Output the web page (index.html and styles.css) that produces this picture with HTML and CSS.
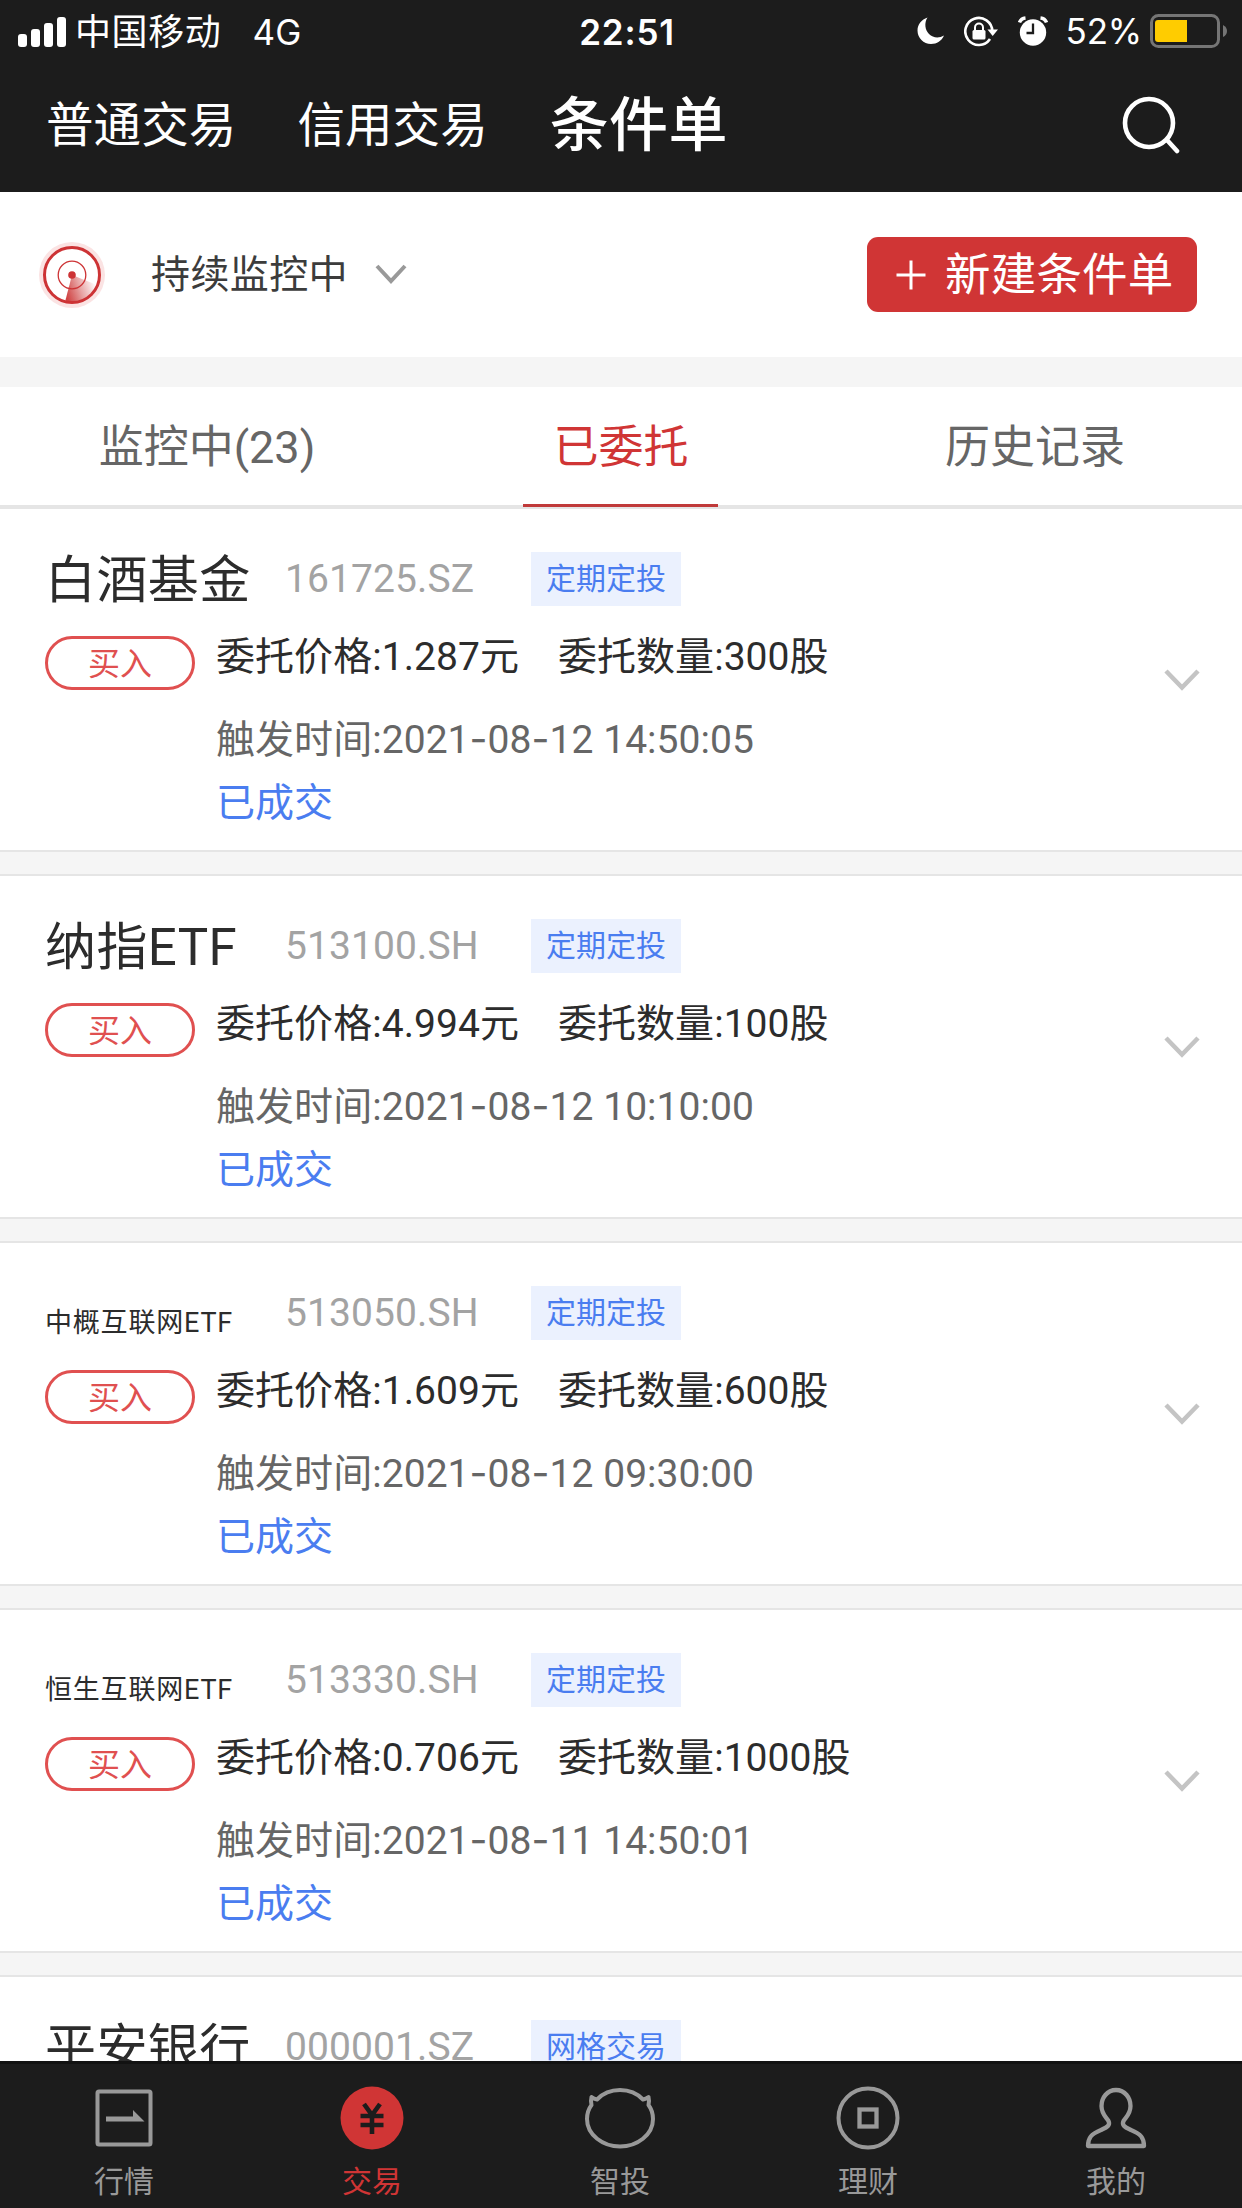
FILE: index.html
```html
<!DOCTYPE html>
<html lang="zh-CN">
<head>
<meta charset="utf-8">
<title>条件单</title>
<link rel="stylesheet" href="styles.css">
</head>
<body>
<div class="app">
  <header class="top">
    <div class="status">
      <div class="status-left">
        <svg class="signal" width="48" height="30" viewBox="0 0 48 30"><g fill="#fff"><rect x="0" y="17" width="9" height="13" rx="3"/><rect x="13" y="12" width="9" height="18" rx="3"/><rect x="26" y="6" width="9" height="24" rx="3"/><rect x="39" y="0" width="9" height="30" rx="3"/></g></svg>
        <span class="carrier">中国移动</span>
        <span class="network">4G</span>
      </div>
      <div class="clock">22:51</div>
      <div class="status-right">
        <svg class="moon" width="28" height="28" viewBox="0 0 28 28"><path fill="#fff" d="M10.5 0.5C7 6 8 13 12 17C16 21 22 21.5 27 18.5C24.500 24 20 27 14 27C6.500 27 0.500 21 0.500 13.500C0.500 7.500 4.500 2.500 10.500 0.500Z"/></svg>
        <svg class="lock" width="34" height="31" viewBox="0 0 34 31"><path d="M28.300 15.200A13.500 13.500 0 1 0 26 23" fill="none" stroke="#fff" stroke-width="2.600"/><path fill="#fff" d="M23.500 13.500H34L28.700 20Z"/><rect x="8.500" y="14" width="13" height="9.500" rx="1.500" fill="#fff"/><path d="M11 15V11.500A4 4 0 0 1 19 11.500V15" fill="none" stroke="#fff" stroke-width="2"/></svg>
        <svg class="alarm" width="30" height="30" viewBox="0 0 30 30"><circle cx="15" cy="16.500" r="13.200" fill="#fff"/><path d="M1.500 6.500Q3 2.500 7.500 2M28.500 6.500Q27 2.500 22.500 2" stroke="#fff" stroke-width="3.500" fill="none"/><path d="M15 7.500V17H8.500" stroke="#1c1c1c" stroke-width="2.300" fill="none"/></svg>
        <span class="percent">52%</span>
        <svg class="battery" width="78" height="34" viewBox="0 0 78 34"><rect x="1.500" y="1.500" width="67" height="31" rx="7" fill="none" stroke="#757575" stroke-width="3"/><path d="M8 6H37V28H8Q5 28 5 25V9Q5 6 8 6Z" fill="#ffcc00"/><path d="M73 11Q77 13 77 17T73 23Z" fill="#757575"/></svg>
      </div>
    </div>
    <nav class="main-nav">
      <a class="nav-link">普通交易</a>
      <a class="nav-link">信用交易</a>
      <a class="nav-link nav-link-active">条件单</a>
      <svg class="search" width="60" height="60" viewBox="0 0 60 60"><g fill="none" stroke="#fff" stroke-width="4.600" stroke-linecap="round"><circle cx="28" cy="29" r="24"/><path d="M46 46L56 57"/></g></svg>
    </nav>
  </header>

  <section class="monitor">
    <svg class="radar" width="68" height="68" viewBox="0 0 68 68">
      <defs><linearGradient id="sweep" x1="0" y1="0.600" x2="0.950" y2="0.300"><stop offset="0" stop-color="#d04545"/><stop offset="0.500" stop-color="#cc3a3a" stop-opacity="0.450"/><stop offset="1" stop-color="#cc3a3a" stop-opacity="0"/></linearGradient></defs>
      <circle cx="34" cy="34" r="33" fill="#fbe3e3"/><circle cx="34" cy="34" r="27.500" fill="#fff"/>
      <path d="M34 34L27 61A27.500 27.500 0 0 0 59 44Z" fill="url(#sweep)"/>
      <circle cx="34" cy="34" r="27.500" fill="none" stroke="#cd3335" stroke-width="3"/>
      <circle cx="34" cy="34" r="13.800" fill="none" stroke="#cd3335" stroke-width="1.300"/>
      <circle cx="34" cy="34" r="3.800" fill="#cd3335"/>
    </svg>
    <span class="monitor-text">持续监控中</span>
    <svg class="monitor-arrow" width="34" height="24" viewBox="0 0 34 24"><path d="M3 3L17 18L31 3" fill="none" stroke="#999" stroke-width="4"/></svg>
    <button class="create"><svg width="30" height="30" viewBox="0 0 30 30"><path d="M15 0.500V29.500M0.500 15H29.500" stroke="#fff" stroke-width="3"/></svg><span>新建条件单</span></button>
  </section>

  <nav class="tabs">
    <a class="tab">监控中(23)</a>
    <a class="tab tab-active">已委托</a>
    <a class="tab">历史记录</a>
  </nav>

  <main class="orders">
    <article class="order">
      <div class="order-head"><h2 class="name">白酒基金</h2><span class="code">161725.SZ</span><span class="tag">定期定投</span></div>
      <div class="order-body">
        <span class="side">买入</span>
        <div class="details">
          <p class="price"><span>委托价格:1.287元</span><span>委托数量:300股</span></p>
          <p class="time">触发时间:2021<i class="dash">-</i>08<i class="dash">-</i>12 14:50:05</p>
          <p class="state">已成交</p>
        </div>
        <svg class="expand" width="36" height="24" viewBox="0 0 36 24"><path d="M2 2L18 18.500L34 2" fill="none" stroke="#c4c4c4" stroke-width="4.500"/></svg>
      </div>
    </article>
    <article class="order">
      <div class="order-head"><h2 class="name">纳指ETF</h2><span class="code">513100.SH</span><span class="tag">定期定投</span></div>
      <div class="order-body">
        <span class="side">买入</span>
        <div class="details">
          <p class="price"><span>委托价格:4.994元</span><span>委托数量:100股</span></p>
          <p class="time">触发时间:2021<i class="dash">-</i>08<i class="dash">-</i>12 10:10:00</p>
          <p class="state">已成交</p>
        </div>
        <svg class="expand" width="36" height="24" viewBox="0 0 36 24"><path d="M2 2L18 18.500L34 2" fill="none" stroke="#c4c4c4" stroke-width="4.500"/></svg>
      </div>
    </article>
    <article class="order">
      <div class="order-head"><h2 class="name name-small">中概互联网ETF</h2><span class="code">513050.SH</span><span class="tag">定期定投</span></div>
      <div class="order-body">
        <span class="side">买入</span>
        <div class="details">
          <p class="price"><span>委托价格:1.609元</span><span>委托数量:600股</span></p>
          <p class="time">触发时间:2021<i class="dash">-</i>08<i class="dash">-</i>12 09:30:00</p>
          <p class="state">已成交</p>
        </div>
        <svg class="expand" width="36" height="24" viewBox="0 0 36 24"><path d="M2 2L18 18.500L34 2" fill="none" stroke="#c4c4c4" stroke-width="4.500"/></svg>
      </div>
    </article>
    <article class="order">
      <div class="order-head"><h2 class="name name-small">恒生互联网ETF</h2><span class="code">513330.SH</span><span class="tag">定期定投</span></div>
      <div class="order-body">
        <span class="side">买入</span>
        <div class="details">
          <p class="price"><span>委托价格:0.706元</span><span>委托数量:1000股</span></p>
          <p class="time">触发时间:2021<i class="dash">-</i>08<i class="dash">-</i>11 14:50:01</p>
          <p class="state">已成交</p>
        </div>
        <svg class="expand" width="36" height="24" viewBox="0 0 36 24"><path d="M2 2L18 18.500L34 2" fill="none" stroke="#c4c4c4" stroke-width="4.500"/></svg>
      </div>
    </article>
    <article class="order">
      <div class="order-head"><h2 class="name">平安银行</h2><span class="code">000001.SZ</span><span class="tag">网格交易</span></div>
    </article>
  </main>

  <nav class="bottom">
    <a class="item"><svg width="72" height="66" viewBox="0 0 72 66"><rect x="9.500" y="6.500" width="53" height="53" rx="1.500" fill="none" stroke="#999" stroke-width="4"/><path d="M18 31.500H45V25L56.500 36.500H18Z" fill="#999"/></svg><span>行情</span></a>
    <a class="item item-active"><svg width="72" height="66" viewBox="0 0 72 66"><circle cx="36" cy="33" r="31.500" fill="#d03535"/><path d="M28 19L36 30L44 19M36 29V49M24.500 31H47.500M24.500 40H47.500" fill="none" stroke="#1c1c1c" stroke-width="4.600"/></svg><span>交易</span></a>
    <a class="item"><svg width="72" height="66" viewBox="0 0 72 66"><path d="M13 14.500Q22 5 36 5T59 14.500Q62 14 64.500 12Q65.500 16 64.500 20Q69 26 69 34C69 50 53 61.500 36 61.500S3 50 3 34Q3 26 7.500 20Q6.500 16 7.500 12Q10 14 13 14.500Z" fill="none" stroke="#999" stroke-width="4" stroke-linejoin="round"/></svg><span>智投</span></a>
    <a class="item"><svg width="72" height="66" viewBox="0 0 72 66"><circle cx="36" cy="33" r="29.500" fill="none" stroke="#999" stroke-width="4"/><rect x="27.500" y="24.500" width="17" height="17" fill="none" stroke="#999" stroke-width="4.300"/></svg><span>理财</span></a>
    <a class="item"><svg width="72" height="66" viewBox="0 0 72 66"><path d="M36 5C27 5 21.500 13 21.500 21C21.500 29 26 32 28.500 36C31 41 25 43 21 45C11 49 8 53 8 61H64C64 53 61 49 51 45C47 43 41 41 43.500 36C46 32 50.500 29 50.500 21C50.500 13 45 5 36 5Z" fill="none" stroke="#999" stroke-width="4.300" stroke-linejoin="round"/></svg><span>我的</span></a>
  </nav>
</div>
</body>
</html>
```
FILE: styles.css
```css
* { box-sizing: border-box; margin: 0; padding: 0; }

body {
  background: #fff;
  font-family: Roboto, "Noto Sans CJK SC", sans-serif;
  color: #2c2c2c;
}

.app {
  display: flex;
  flex-direction: column;
  width: 1242px;
  height: 2208px;
  overflow: hidden;
}

svg { display: block; flex: none; }

/* Status bar and main navigation */
.top { flex: none; height: 192px; background: #1c1c1c; color: #fff; }

.status {
  display: grid;
  grid-template-columns: 1fr auto 1fr;
  align-items: center;
  height: 60px;
  padding: 0 14px 0 18px;
  font-family: Inter, "Noto Sans CJK SC", sans-serif;
  font-size: 36px;
  line-height: 60px;
}
.status-left { display: flex; align-items: center; padding-top: 2px; }
.carrier { margin-left: 9px; letter-spacing: 0.6px; }
.network { margin-left: 31px; font-size: 35px; letter-spacing: 0.3px; }
.clock { padding: 1px 0 0 8px; font-weight: 600; font-size: 35px; letter-spacing: 0.8px; }
.status-right { display: flex; align-items: center; justify-content: flex-end; }
.moon { margin-right: 19px; }
.lock { margin-right: 20px; }
.alarm { margin-right: 18px; }
.percent { margin-right: 8px; font-size: 35px; letter-spacing: -0.2px; }

.main-nav { display: flex; align-items: center; height: 128px; padding: 0 61px 0 46px; }
.nav-link { margin-right: 61px; padding-top: 4px; font-size: 47.500px; line-height: 70px; letter-spacing: 0.1px; }
.nav-link-active { font-size: 59px; font-weight: 500; letter-spacing: 0.3px; margin: 0 0 0 1px; }
.search { margin-left: auto; }

/* Monitoring state */
.monitor {
  flex: none;
  display: flex;
  align-items: center;
  height: 165px;
  padding: 0 45px 0 38px;
}
.monitor-text { margin-left: 45px; padding-top: 1px; font-size: 39px; letter-spacing: 0.4px; line-height: 60px; color: #3c3c3c; }
.monitor-arrow { margin-left: 26px; }
.create {
  display: flex;
  align-items: center;
  gap: 19px;
  width: 330px;
  height: 75px;
  margin-left: auto;
  padding-left: 29px;
  border: 0;
  border-radius: 11px;
  background: #d03535;
  color: #fff;
  font: 45.500px/75px Roboto, "Noto Sans CJK SC", sans-serif;
  letter-spacing: 0.2px;
}
.create span { padding-top: 1px; }

/* Tabs */
.tabs {
  flex: none;
  display: flex;
  height: 152px;
  border-top: 30px solid #f5f5f5;
  border-bottom: 4px solid #e5e5e5;
}
.tab {
  flex: 1;
  display: flex;
  justify-content: center;
  font-size: 45px;
  line-height: 122px;
  color: #666;
}
.tab-active { color: #d03535; }
.tab-active::after {
  content: "";
  position: absolute;
  top: 504px;
  left: 523px;
  width: 195px;
  height: 3px;
  background: #c03a3a;
}

/* Orders */
.orders { flex: 1; min-height: 0; overflow: hidden; background: #f5f5f5; }
.order {
  height: 345px;
  margin-bottom: 22px;
  padding: 39px 45px 0;
  background: #fff;
  border-top: 2px solid #e5e5e5;
  border-bottom: 2px solid #e5e5e5;
}
.order:first-child { height: 343px; border-top: 0; }
.order-head { display: flex; align-items: center; height: 62px; }
.name { width: 240px; padding-top: 3px; font-size: 51px; letter-spacing: 0.400px; line-height: 62px; font-weight: 400; white-space: nowrap; }
.name-small { padding-top: 19px; font-size: 27px; letter-spacing: 0.800px; }
.code { width: 246px; font-size: 39px; letter-spacing: 0.100px; line-height: 54px; color: #a3a3a3; }
.tag {
  width: 150px;
  height: 54px;
  background: #ebf1fe;
  color: #4a7df0;
  font-size: 30px;
  line-height: 53px;
  text-align: center;
}
.order-body { display: flex; align-items: flex-start; }
.side {
  width: 150px;
  height: 54px;
  margin-top: 26px;
  border: 3px solid #e05050;
  border-radius: 27px;
  color: #e05050;
  font-size: 32px;
  line-height: 50px;
  text-align: center;
}
.details { margin: 6px 0 0 21px; font-size: 39px; letter-spacing: 0.05px; }
.price { display: flex; gap: 39px; line-height: 82px; }
.time { line-height: 82px; color: #666; }
.dash { font-family: Inter, sans-serif; font-style: normal; }
.state { margin-top: -1px; line-height: 46px; color: #4a7df0; }
.expand { margin: 59px -3px 0 auto; }

/* Bottom navigation */
.bottom {
  flex: none;
  display: flex;
  height: 147px;
  padding: 21px 2px 0 0;
  border-top: 3px solid #121212;
  background: #1c1c1c;
}
.item {
  flex: 1;
  display: flex;
  flex-direction: column;
  align-items: center;
  color: #999;
  font-size: 30px;
  line-height: 62px;
}
.item-active { color: #d03535; }
```
